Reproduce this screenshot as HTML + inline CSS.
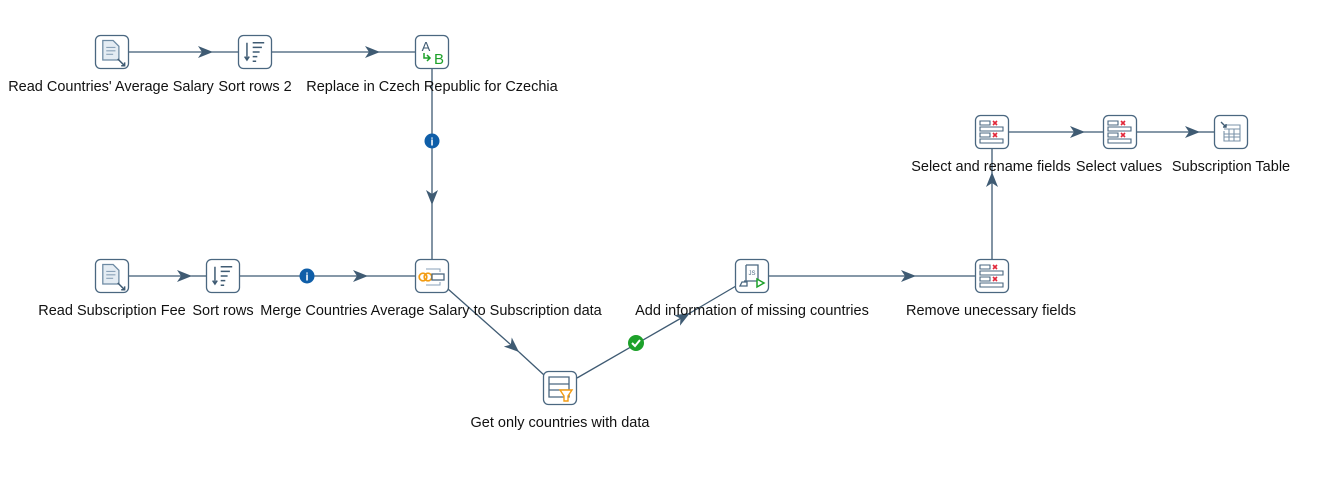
<!DOCTYPE html>
<html><head><meta charset="utf-8"><style>
html,body{margin:0;padding:0;background:#fff;width:1317px;height:486px;overflow:hidden}
svg text{font-family:"Liberation Sans",sans-serif;font-size:14.5px;fill:#111;text-anchor:middle}
</style></head><body>
<svg width="1317" height="486" viewBox="0 0 1317 486" xmlns="http://www.w3.org/2000/svg">
<defs>
<marker id="a" markerWidth="16" markerHeight="12" refX="15" refY="6" orient="auto" markerUnits="userSpaceOnUse">
<path d="M0,0 L15,6 L0,12 L4,6 Z" fill="#3f5b73"/></marker>
<g id="box"><rect x="-16.5" y="-16.5" width="33" height="33" rx="5" fill="#fff" stroke="#4a6780" stroke-width="1.3"/></g>
<g id="file"><use href="#box"/><g transform="scale(1.15)"><path d="M-8,-10 h9 l5,5 v12 h-14 z" fill="#e4ecf3" stroke="#6d8aa3" stroke-width="1.1"/><path d="M-5,-4 h8 M-5,-1 h8 M-5,2 h6" stroke="#8aa2b8" stroke-width="1"/><path d="M5,6 l6,6 M8,12 h3 v-3" stroke="#3f5b73" stroke-width="1.3" fill="none"/></g></g>
<g id="sort"><use href="#box"/><g transform="scale(1.15)"><path d="M-7,-8 v14 M-9,4 l2,3 l2,-3 M-2,-8 h10 M-2,-4 h8 M-2,0 h6 M-2,4 h4 M-2,8 h3" stroke="#3f5b73" stroke-width="1.3" fill="none"/></g></g>
<g id="sel"><use href="#box"/><path d="M-12,-11 h10 v4 h-10 z M-12,-5 h23 v4 h-23 z M-12,1 h10 v4 h-10 z M-12,7 h23 v4 h-23 z" fill="#fff" stroke="#4a6780" stroke-width="1.1"/><path d="M1,-11 l4,4 M5,-11 l-4,4 M1,1 l4,4 M5,1 l-4,4" stroke="#e2283a" stroke-width="1.6"/></g>
</defs>
<g stroke="#3f5b73" stroke-width="1.3" fill="none">
<line x1="129" y1="52" x2="213" y2="52" marker-end="url(#a)"/>
<line x1="213" y1="52" x2="238" y2="52"/>
<line x1="272" y1="52" x2="380" y2="52" marker-end="url(#a)"/>
<line x1="380" y1="52" x2="415" y2="52"/>
<line x1="432" y1="69" x2="432" y2="205" marker-end="url(#a)"/>
<line x1="432" y1="205" x2="432" y2="259"/>
<line x1="128" y1="276" x2="192" y2="276" marker-end="url(#a)"/>
<line x1="192" y1="276" x2="206" y2="276"/>
<line x1="240" y1="276" x2="368" y2="276" marker-end="url(#a)"/>
<line x1="368" y1="276" x2="415" y2="276"/>
<line x1="448" y1="289" x2="519" y2="352" marker-end="url(#a)"/>
<line x1="519" y1="352" x2="544" y2="375"/>
<line x1="577" y1="378" x2="690" y2="313" marker-end="url(#a)"/>
<line x1="690" y1="313" x2="736" y2="286"/>
<line x1="769" y1="276" x2="916" y2="276" marker-end="url(#a)"/>
<line x1="916" y1="276" x2="975" y2="276"/>
<line x1="992" y1="259" x2="992" y2="172" marker-end="url(#a)"/>
<line x1="992" y1="172" x2="992" y2="149"/>
<line x1="1009" y1="132" x2="1085" y2="132" marker-end="url(#a)"/>
<line x1="1085" y1="132" x2="1103" y2="132"/>
<line x1="1137" y1="132" x2="1200" y2="132" marker-end="url(#a)"/>
<line x1="1200" y1="132" x2="1214" y2="132"/>
</g>
<circle cx="432" cy="141" r="7.5" fill="#0f5ea8"/><text x="432" y="145.5" style="fill:#fff;font-size:11px;font-weight:bold">i</text>
<circle cx="307" cy="276" r="7.5" fill="#0f5ea8"/><text x="307" y="280.5" style="fill:#fff;font-size:11px;font-weight:bold">i</text>
<circle cx="636" cy="343" r="8" fill="#1da12a"/><path d="M632,343 l3,3 l5,-6" stroke="#fff" stroke-width="2" fill="none"/>
<use href="#file" x="112" y="52"/>
<use href="#sort" x="255" y="52"/>
<g transform="translate(432,52)"><use href="#box"/><text x="-6" y="-1" style="font-size:13px;fill:#3f5b73">A</text><text x="7" y="12" style="font-size:15px;fill:#1da12a">B</text><path d="M-8,1 v5 h6 M-5,3 l3,3 l-3,3" stroke="#1da12a" stroke-width="1.5" fill="none"/></g>
<use href="#file" x="112" y="276"/>
<use href="#sort" x="223" y="276"/>
<g transform="translate(432,276)"><use href="#box"/><circle cx="-9" cy="1" r="3.8" fill="none" stroke="#f39c12" stroke-width="1.7"/><circle cx="-4" cy="1" r="3.8" fill="none" stroke="#f39c12" stroke-width="1.7"/><rect x="0" y="-2" width="12" height="6" fill="#fff" stroke="#4a6780" stroke-width="1.3"/><path d="M-6,-7 h14 v3 M-6,9 h14 v-3" stroke="#8aa2b8" stroke-width="1" fill="none"/></g>
<g transform="translate(560,388)"><use href="#box"/><path d="M-11,-11 h20 v20 h-20 z M-11,-4 h20 M-11,2 h20" fill="#fff" stroke="#4a6780" stroke-width="1.3"/><path d="M0,2 h12 l-4,6 v5 h-4 v-5 z" fill="#fff" stroke="#f39c12" stroke-width="1.4"/></g>
<g transform="translate(752,276)"><use href="#box"/><path d="M-6,-11 h12 v16 h-14 M-6,-11 v17 M-10,6 h5 v4 h-7 z" fill="none" stroke="#4a6780" stroke-width="1.3"/><text x="0" y="-1" style="font-size:6px;fill:#4a6780">JS</text><path d="M5,3 l7,4 l-7,4 z" fill="#fff" stroke="#1da12a" stroke-width="1.5"/></g>
<use href="#sel" x="992" y="276"/>
<use href="#sel" x="992" y="132"/>
<use href="#sel" x="1120" y="132"/>
<g transform="translate(1231,132)"><use href="#box"/><path d="M-5,-7 h14 v16 h-16 v-10 M-7,2 h16 M-7,5 h16 M-2,-3 v12 M3,-3 v12 M-7,-3 h16" fill="none" stroke="#7b93a8" stroke-width="1.1"/><path d="M-10,-10 l5,5 M-5,-8 v3 h-3" stroke="#3f5b73" stroke-width="1.4" fill="none"/></g>
<text x="111" y="91">Read Countries' Average Salary</text>
<text x="255" y="91">Sort rows 2</text>
<text x="432" y="91">Replace in Czech Republic for Czechia</text>
<text x="112" y="315">Read Subscription Fee</text>
<text x="223" y="315">Sort rows</text>
<text x="431" y="315">Merge Countries Average Salary to Subscription data</text>
<text x="752" y="315">Add information of missing countries</text>
<text x="991" y="315">Remove unecessary fields</text>
<text x="560" y="427">Get only countries with data</text>
<text x="991" y="171">Select and rename fields</text>
<text x="1119" y="171">Select values</text>
<text x="1231" y="171">Subscription Table</text>
</svg>
</body></html>
